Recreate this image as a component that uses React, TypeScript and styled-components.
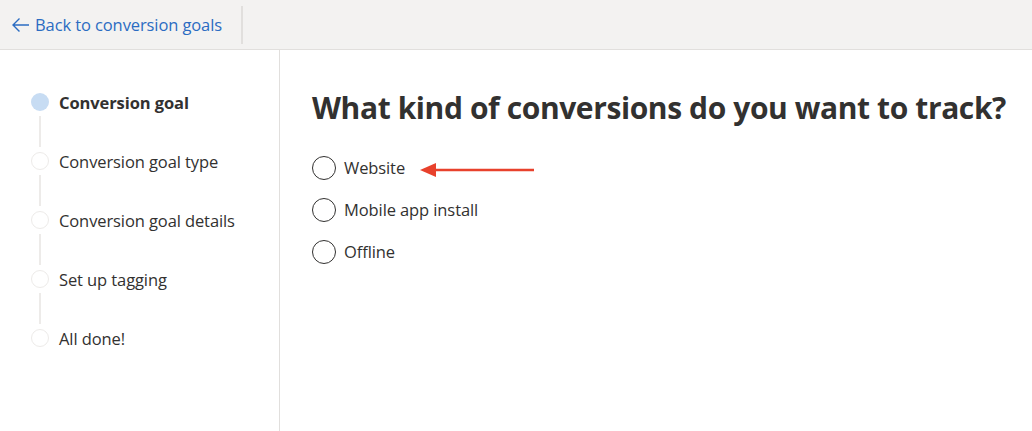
import React from 'react'
import styled, { createGlobalStyle } from 'styled-components'

const GlobalStyle = createGlobalStyle`
	html, body {
		margin: 0;
		padding: 0;
		background: #ffffff;
	}
	body {
		font-family: 'Open Sans', 'Noto Sans', sans-serif;
		color: #323130;
	}
`

const Page = styled.div`
	width: 1032px;
	height: 431px;
	display: flex;
	flex-direction: column;
	overflow: hidden;
`

const TopBar = styled.div`
	height: 49px;
	flex-shrink: 0;
	display: flex;
	align-items: center;
	background: #f3f2f1;
	border-bottom: 1px solid #e1dfdd;
`

const BackLink = styled.a`
	display: flex;
	align-items: center;
	gap: 5px;
	padding: 0 19px 0 11px;
	height: 38px;
	color: #2b6cc2;
	font-size: 16.5px;
	text-decoration: none;
	border-right: 2px solid #e1dfdd;
	letter-spacing: -0.1px;
`

const Body = styled.div`
	flex: 1;
	display: flex;
`

const Sidebar = styled.nav`
	width: 280px;
	flex-shrink: 0;
	border-right: 1px solid #e1dfdd;
	padding: 43px 0 0 31px;
	box-sizing: border-box;
`

const Step = styled.div`
	display: flex;
	flex-direction: column;
`

const StepRow = styled.div`
	display: flex;
	align-items: center;
	gap: 10px;
	height: 18px;
`

const Dot = styled.span<{ $active?: boolean }>`
	width: 18px;
	height: 18px;
	border-radius: 50%;
	box-sizing: border-box;
	background: ${p => (p.$active ? '#c7dcf3' : '#ffffff')};
	border: ${p => (p.$active ? 'none' : '1.5px solid #edebe9')};
	flex-shrink: 0;
`

const StepLabel = styled.span<{ $active?: boolean }>`
	font-size: 16.5px;
	font-weight: ${p => (p.$active ? 700 : 400)};
	color: #323130;
	white-space: nowrap;
	letter-spacing: -0.1px;
`

const Connector = styled.span`
	display: block;
	width: 2px;
	height: 31px;
	margin: 5px 0 5px 8px;
	background: #edebe9;
`

const Main = styled.main`
	flex: 1;
	padding: 36px 0 0 32px;
`

const Heading = styled.h1`
	margin: 0 0 25px;
	font-size: 30px;
	font-weight: 700;
	color: #323130;
	white-space: nowrap;
	letter-spacing: -0.4px;
	line-height: 44px;
`

const Options = styled.div`
	display: flex;
	flex-direction: column;
	gap: 17px;
`

const Option = styled.label`
	display: flex;
	align-items: center;
	gap: 8px;
	height: 25px;
	font-size: 16.5px;
	color: #323130;
	letter-spacing: -0.1px;
`

const Radio = styled.span`
	width: 24px;
	height: 24px;
	border-radius: 50%;
	border: 1.5px solid #323130;
	box-sizing: border-box;
	flex-shrink: 0;
`

const Pointer = styled.svg`
	margin-left: 7px;
	margin-top: 4px;
`

const steps = [
	'Conversion goal',
	'Conversion goal type',
	'Conversion goal details',
	'Set up tagging',
	'All done!'
]

const options = ['Website', 'Mobile app install', 'Offline']

const App = () => {
	return (
		<Page>
			<GlobalStyle />
			<TopBar>
				<BackLink href='#'>
					<svg width='19' height='16' viewBox='0 0 19 16' fill='none'>
						<path d='M18 8H2M8.5 1.5L2 8l6.5 6.5' stroke='#2b6cc2' strokeWidth='1.4' />
					</svg>
					Back to conversion goals
				</BackLink>
			</TopBar>
			<Body>
				<Sidebar>
					{steps.map((s, i) => (
						<Step key={s}>
							<StepRow>
								<Dot $active={i === 0} />
								<StepLabel $active={i === 0}>{s}</StepLabel>
							</StepRow>
							{i < steps.length - 1 && <Connector />}
						</Step>
					))}
				</Sidebar>
				<Main>
					<Heading>What kind of conversions do you want to track?</Heading>
					<Options>
						{options.map((o, i) => (
							<Option key={o}>
								<Radio />
								{o}
								{i === 0 && (
									<Pointer width='114' height='14' viewBox='0 0 114 14'>
										<path d='M114 7H12' stroke='#e8412c' strokeWidth='2.5' />
										<path d='M0 7L16 0v14z' fill='#e8412c' />
									</Pointer>
								)}
							</Option>
						))}
					</Options>
				</Main>
			</Body>
		</Page>
	)
}

export default App
